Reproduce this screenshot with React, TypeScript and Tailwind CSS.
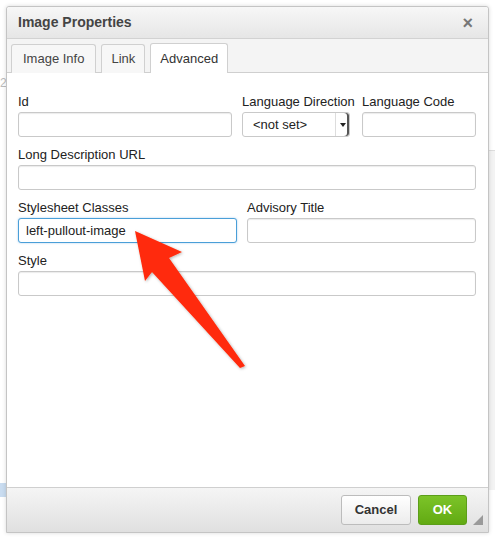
import React from "react";

const font = { fontFamily: '"Liberation Sans", Arial, sans-serif' };

const Field = ({
  label,
  value,
  focused,
  className,
  children,
}: {
  label: string;
  value?: string;
  focused?: boolean;
  className?: string;
  children?: React.ReactNode;
}) => (
  <div className={`flex flex-col ${className ?? ""}`}>
    <label className="text-[13px] leading-[15px] text-[#222] mb-[3px] whitespace-nowrap">{label}</label>
    {children ?? (
      <div
        className={`h-[25px] rounded-[3px] bg-white px-[7px] flex items-center text-[13px] text-[#222] ${
          focused
            ? "border border-[#4a9fd8] shadow-[0_0_2px_rgba(70,150,220,0.5)]"
            : "border border-[#c9c9c9] shadow-[inset_0_1px_1px_rgba(0,0,0,0.08)]"
        }`}
      >
        {value}
      </div>
    )}
  </div>
);

const App = () => {
  return (
    <div className="relative w-[495px] h-[538px] bg-white overflow-hidden" style={font}>
      {/* page behind the dialog */}
      <div className="absolute left-0 top-[74px] text-[12px] text-[#bbb]">2</div>
      <div className="absolute left-0 top-[483px] w-[6px] h-[14px] bg-[#c9dcf0]" />
      <div className="absolute right-0 top-[150px] w-[7px] h-[340px] bg-[#f3f3f3] border-t border-[#ddd]" />

      {/* dialog */}
      <div className="absolute left-[6px] top-[6px] w-[483px] h-[527px] border border-[#c4c4c4] rounded-t-[3px] bg-white flex flex-col shadow-[0_0_4px_rgba(0,0,0,0.15)]">
        {/* title */}
        <div className="h-[32px] flex items-center justify-between px-[11px] bg-gradient-to-b from-[#f7f7f7] to-[#e6e6e6] border-b border-[#d2d2d2] rounded-t-[3px]">
          <span className="text-[14px] font-bold text-[#444]">Image Properties</span>
          <span className="text-[18px] font-bold text-[#777] leading-none mr-[4px]">×</span>
        </div>

        {/* tabs */}
        <div className="h-[34px] flex items-end gap-[5px] px-[4px] bg-[#f4f4f4] border-b border-[#cfcfcf]">
          <div className="h-[29px] px-[11px] flex items-center text-[13px] text-[#444] border border-b-0 border-[#d0d0d0] rounded-t-[3px] bg-[#f7f7f7] -mb-px">Image Info</div>
          <div className="h-[29px] px-[9px] flex items-center text-[13px] text-[#444] border border-b-0 border-[#d0d0d0] rounded-t-[3px] bg-[#f7f7f7] -mb-px">Link</div>
          <div className="h-[30px] px-[9px] flex items-center text-[13px] text-[#333] border border-b-0 border-[#d0d0d0] rounded-t-[3px] bg-white -mb-px relative z-10">Advanced</div>
        </div>

        {/* content */}
        <div className="flex-1 px-[11px] pt-[21px] flex flex-col gap-[10px]">
          <div className="flex">
            <Field label="Id" className="w-[214px]" />
            <Field label="Language Direction" className="w-[108px] ml-[10px]">
              <div className="h-[25px] rounded-[3px] border border-[#c9c9c9] bg-white flex items-center text-[13px] text-[#222]">
                <span className="flex-1 pl-[10px]">&lt;not set&gt;</span>
                <div className="w-[14px] h-full border-l border-[#ddd] flex items-center justify-center shadow-[inset_-2px_0_0_#555] rounded-r-[3px]">
                  <svg width="6" height="4" viewBox="0 0 6 4"><polygon points="0,0 6,0 3,4" fill="#222" /></svg>
                </div>
              </div>
            </Field>
            <Field label="Language Code" className="w-[114px] ml-[12px]" />
          </div>
          <Field label="Long Description URL" className="w-[458px]" />
          <div className="flex">
            <Field label="Stylesheet Classes" value="left-pullout-image" focused className="w-[219px]" />
            <Field label="Advisory Title" className="w-[229px] ml-[10px]" />
          </div>
          <Field label="Style" className="w-[458px]" />
        </div>

        {/* footer */}
        <div className="h-[45px] border-t border-[#cfcfcf] bg-gradient-to-b from-[#f5f5f5] to-[#e0e0e0] flex items-center justify-end pr-[21px] gap-[7px] relative">
          <div className="h-[30px] w-[70px] rounded-[3px] border border-[#bcbcbc] bg-gradient-to-b from-white to-[#ececec] flex items-center justify-center text-[13px] font-bold text-[#333]">Cancel</div>
          <div className="h-[30px] w-[49px] rounded-[3px] border border-[#5c9e1a] bg-gradient-to-b from-[#7cc428] to-[#62aa12] flex items-center justify-center text-[13px] font-bold text-white">OK</div>
          <svg className="absolute right-[5px] bottom-[7px]" width="10" height="10" viewBox="0 0 10 10">
            <polygon points="10,0 10,10 0,10" fill="#9a9a9a" />
          </svg>
        </div>
      </div>

      {/* red arrow annotation */}
      <svg className="absolute left-0 top-0 pointer-events-none" width="495" height="538" viewBox="0 0 495 538">
        <defs>
          <filter id="sh" x="-20%" y="-20%" width="140%" height="140%">
            <feDropShadow dx="1" dy="1" stdDeviation="1.5" floodColor="#000" floodOpacity="0.3" />
          </filter>
        </defs>
        <polygon
          points="135,231 182,252 169,258 245,366 240,368 152,272 145,281"
          fill="#ff2a0a"
          filter="url(#sh)"
        />
      </svg>
    </div>
  );
};

export default App;
